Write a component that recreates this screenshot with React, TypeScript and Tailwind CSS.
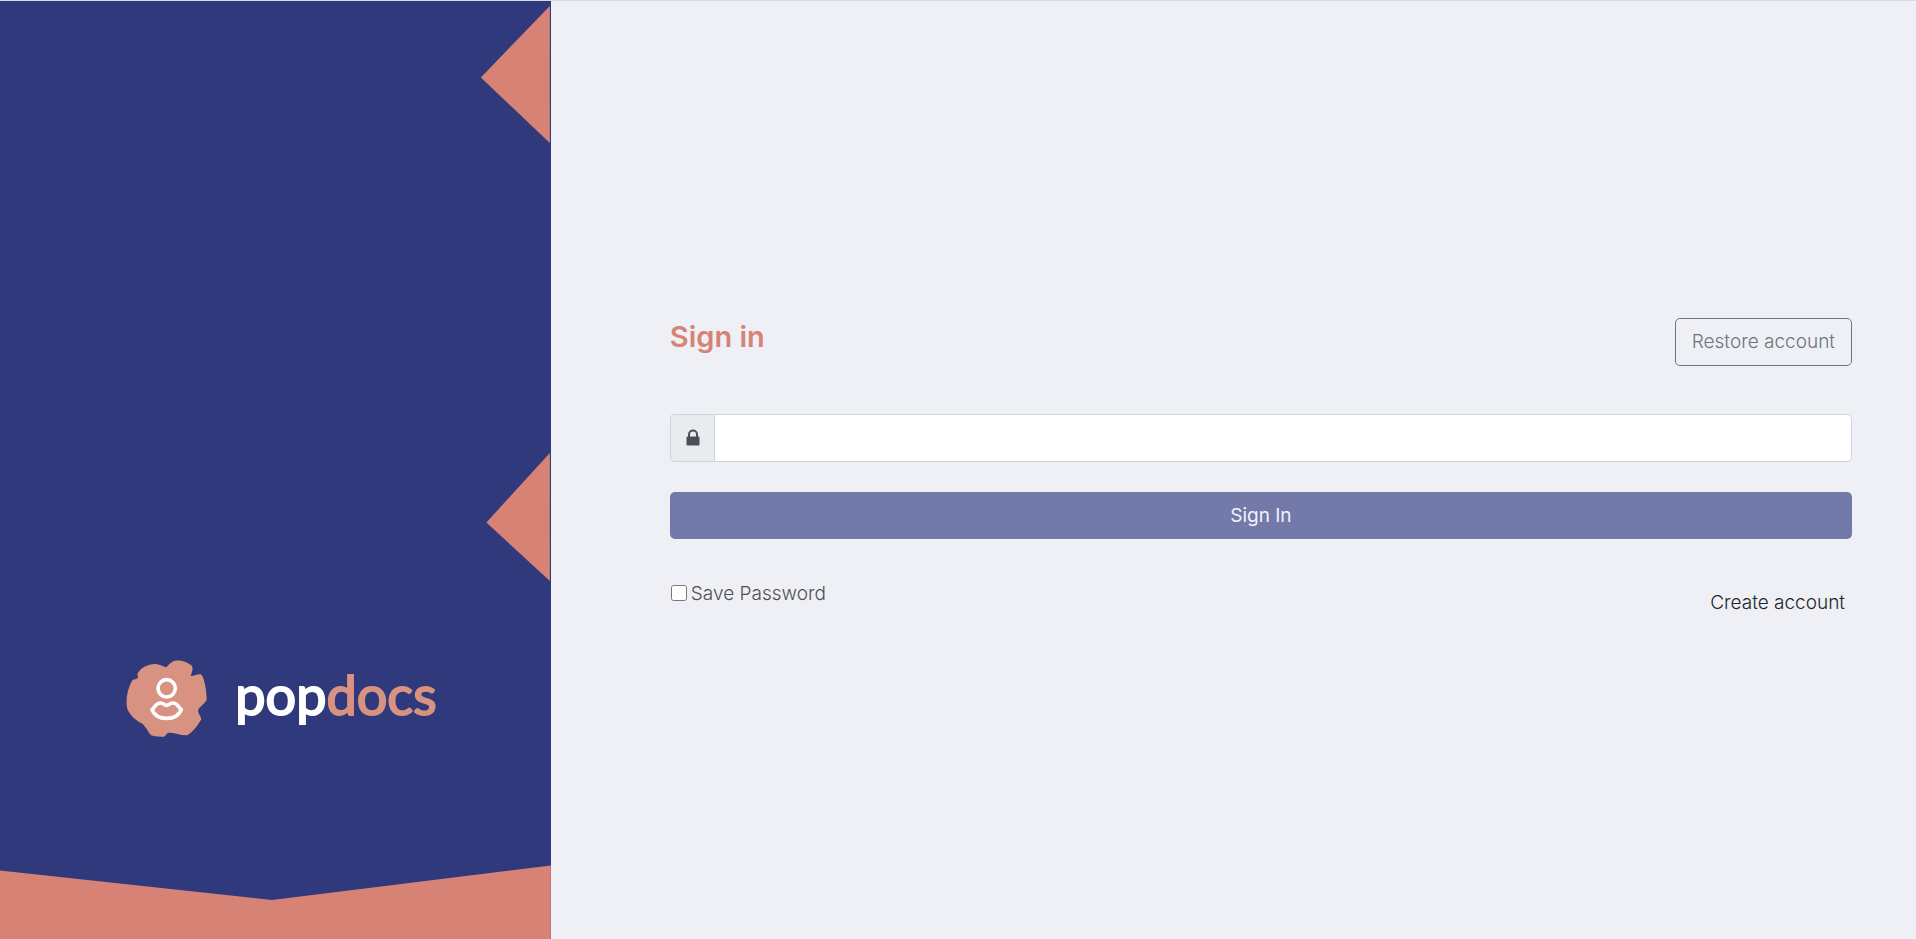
function LogoMark() {
  return (
    <svg viewBox="33 31 243 231" className="h-[77px] w-[81px] shrink-0" aria-hidden="true">
      <path
        fill="#d89282"
        d="M67 73C75 56 98 43 121 43C133 44 146 50 153 53C161 47 168 35 180 33C197 31 219 37 231 49C235 59 231 67 227 79C237 80 251 71 259 75C268 84 275 122 275 150C272 160 252 171 249 183C250 193 258 200 259 208C252 223 235 245 218 256C200 261 178 246 159 250C153 252 152 260 147 261C132 262 116 260 108 257C99 246 92 231 83 223C72 216 46 202 37 177C31 155 36 120 52 92C57 88 65 89 68 86C71 81 66 77 67 73Z"
      />
      <g fill="none" stroke="#ffffff" strokeWidth="11" strokeLinejoin="round">
        <circle cx="155" cy="116" r="26" />
        <path d="M111 180C118 176 122 159 137 160C146 161 148 167 155 167C162 167 164 161 173 160C188 159 192 176 199 180C192 196 176 206 155 206C134 206 118 196 111 180Z" />
      </g>
    </svg>
  );
}

function BrandPanel() {
  return (
    <aside className="relative flex w-[28.75%] shrink-0 flex-col justify-end bg-[#30397b] pb-[202px]">
      <svg
        viewBox="0 0 551 938"
        preserveAspectRatio="none"
        className="absolute inset-0 h-full w-full"
        fill="#d68375"
        aria-hidden="true"
      >
        <path d="M550 5L481 76.500L550 142Z" />
        <path d="M550 452L486.500 521.500L550 580Z" />
        <path d="M0 869.500L272 899L551 864.500V938H0Z" />
      </svg>
      <div className="relative flex items-center justify-center gap-7 pl-3">
        <LogoMark />
        <span className="-mt-2 font-['Lato','Liberation_Sans',sans-serif] text-[54px] leading-[64px] font-normal text-white [-webkit-text-stroke:2px_currentColor] [stroke-linejoin:round]">
          pop<span className="text-[#d89282]">docs</span>
        </span>
      </div>
    </aside>
  );
}

function LockIcon() {
  return (
    <svg viewBox="0 0 14 17" className="ml-px h-[17px] w-[14px]" aria-hidden="true">
      <path d="M3 8V5.500a4 4 0 0 1 8 0V8" fill="none" stroke="#495057" strokeWidth="2" />
      <rect x="0.500" y="7.500" width="13" height="9" rx="1" fill="#495057" />
    </svg>
  );
}

export default function App() {
  return (
    <div className="flex min-h-screen border-t border-[#d8dae0] bg-[#eff0f6] font-['Inter','Liberation_Sans',sans-serif] text-[19px] font-light">
      <BrandPanel />
      <main className="flex grow flex-col justify-center pt-[4px] pr-16 pl-[119px]">
        <form onSubmit={(e) => e.preventDefault()}>
          <div className="flex items-start justify-between">
            <h1 className="text-[29px] leading-[38px] font-semibold text-[#d68375]">Sign in</h1>
            <button
              type="button"
              className="h-12 rounded-[5px] border border-[#6c757d] px-4 pt-[2px] text-[#6c757d]"
            >
              Restore account
            </button>
          </div>
          <div className="mt-12 flex h-12">
            <label
              htmlFor="password"
              aria-label="Password"
              className="flex w-11 shrink-0 items-center justify-center rounded-l-[5px] border border-r-0 border-[#ced4da] bg-[#e9ecef]"
            >
              <LockIcon />
            </label>
            <input
              id="password"
              type="password"
              className="min-w-0 grow rounded-r-[5px] border border-[#ced4da] bg-white px-4 outline-none"
            />
          </div>
          <button
            type="submit"
            className="mt-[30px] h-[47px] w-full rounded-[5px] bg-[#7379a8] pt-[2px] font-normal text-[#f3f3f9]"
          >
            Sign In
          </button>
          <div className="mt-10 flex items-start justify-between">
            <label className="flex items-start gap-1 leading-[30px] text-[#4f5052]">
              <input type="checkbox" className="mt-[6px] ml-px size-4" />
              Save Password
            </label>
            <a href="#create" className="px-[7px] pt-[9px] pb-[9px] leading-[30px] text-[#212529]">
              Create account
            </a>
          </div>
        </form>
      </main>
    </div>
  );
}
